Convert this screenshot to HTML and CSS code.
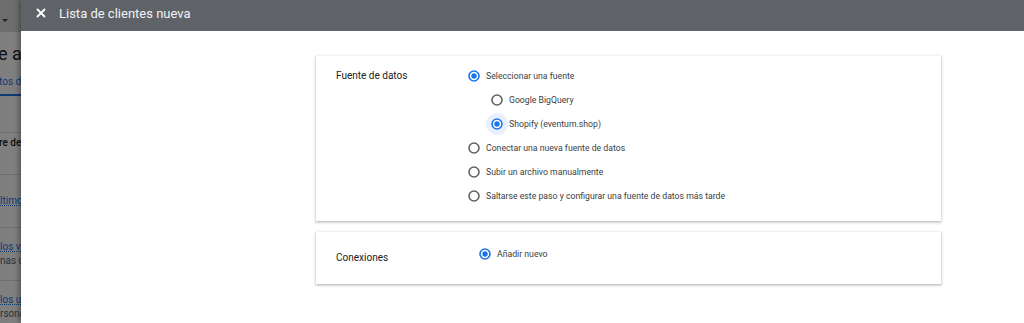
FILE: index.html
```html
<!DOCTYPE html>
<html lang="es">

<head>
    <meta charset="UTF-8">
    <meta name="viewport" content="width=device-width, initial-scale=1.0">
    <title>Lista de clientes nueva</title>
    <link rel="stylesheet" href="styles.css">
</head>

<body>
    <div class="page">
        <!-- page behind the dialog, dimmed -->
        <div class="behind">
            <div class="b-bar"><span class="b-caret"></span></div>
            <div class="b-title">e au</div>
            <div class="b-tab">tos de</div>
            <div class="b-head">re del</div>
            <div class="b-row"><span class="b-link">ltimos</span></div>
            <div class="b-row">
                <span class="b-link">los vi</span>
                <span class="b-sub">nas qu</span>
            </div>
            <div class="b-row">
                <span class="b-link">los us</span>
                <span class="b-sub">rsona</span>
            </div>
        </div>

        <div class="dialog">
            <div class="dialog-head">
                <svg class="close" width="10" height="10" viewBox="0 0 10 10">
                    <path d="M1 1 L9 9 M9 1 L1 9" stroke="#fff" stroke-width="1.8" />
                </svg>
                <span class="dialog-title">Lista de clientes nueva</span>
            </div>

            <div class="dialog-body">
                <section class="card card-source">
                    <div class="card-label">Fuente de datos</div>
                    <div class="options">
                        <div class="opt">
                            <span class="radio on"><svg width="12" height="12" viewBox="0 0 12 12"><circle cx="6" cy="6" r="5" fill="none" stroke="#1a73e8" stroke-width="1.6"/><circle cx="6" cy="6" r="2.7" fill="#1a73e8"/></svg></span>
                            Seleccionar una fuente
                        </div>
                        <div class="opt sub">
                            <span class="radio"><svg width="12" height="12" viewBox="0 0 12 12"><circle cx="6" cy="6" r="5" fill="none" stroke="#5f6368" stroke-width="1.6"/></svg></span>
                            Google BigQuery
                        </div>
                        <div class="opt sub">
                            <span class="radio on focus"><svg width="12" height="12" viewBox="0 0 12 12"><circle cx="6" cy="6" r="5" fill="none" stroke="#1a73e8" stroke-width="1.6"/><circle cx="6" cy="6" r="2.7" fill="#1a73e8"/></svg></span>
                            Shopify (eventum.shop)
                        </div>
                        <div class="opt">
                            <span class="radio"><svg width="12" height="12" viewBox="0 0 12 12"><circle cx="6" cy="6" r="5" fill="none" stroke="#5f6368" stroke-width="1.6"/></svg></span>
                            Conectar una nueva fuente de datos
                        </div>
                        <div class="opt">
                            <span class="radio"><svg width="12" height="12" viewBox="0 0 12 12"><circle cx="6" cy="6" r="5" fill="none" stroke="#5f6368" stroke-width="1.6"/></svg></span>
                            Subir un archivo manualmente
                        </div>
                        <div class="opt">
                            <span class="radio"><svg width="12" height="12" viewBox="0 0 12 12"><circle cx="6" cy="6" r="5" fill="none" stroke="#5f6368" stroke-width="1.6"/></svg></span>
                            Saltarse este paso y configurar una fuente de datos más tarde
                        </div>
                    </div>
                </section>

                <section class="card card-conn">
                    <div class="card-label">Conexiones</div>
                    <div class="options">
                        <div class="opt">
                            <span class="radio on"><svg width="12" height="12" viewBox="0 0 12 12"><circle cx="6" cy="6" r="5" fill="none" stroke="#1a73e8" stroke-width="1.6"/><circle cx="6" cy="6" r="2.7" fill="#1a73e8"/></svg></span>
                            Añadir nuevo
                        </div>
                    </div>
                </section>
            </div>
        </div>
    </div>
</body>

</html>
```

FILE: styles.css
```css
html,
body {
    margin: 0;
    height: 100%;
    overflow: hidden;
}

body {
    font-family: Roboto, "Liberation Sans", sans-serif;
    background: #fff;
}

.page {
    display: flex;
    height: 323px;
}

/* ---- page behind the dialog ---- */
.behind {
    position: relative;
    width: 21px;
    flex-shrink: 0;
    overflow: hidden;
    white-space: nowrap;
    background: #fff;
    color: #202124;
}

.behind::after {
    content: "";
    position: absolute;
    top: 0;
    left: 0;
    right: 0;
    bottom: 0;
    background: rgba(0, 0, 0, 0.5);
}

.b-bar {
    height: 32px;
    background: #dcdcdc;
    padding-left: 2px;
    box-sizing: border-box;
    padding-top: 19px;
}

.b-caret {
    display: block;
    width: 0;
    height: 0;
    border-left: 3px solid transparent;
    border-right: 3px solid transparent;
    border-top: 3px solid #444;
}

.b-title {
    height: 40px;
    line-height: 44px;
    font-size: 18px;
    margin-left: -2px;
}

.b-tab {
    height: 22px;
    line-height: 20px;
    font-size: 10px;
    color: #1a73e8;
    border-bottom: 2px solid #1a73e8;
    margin-left: -1px;
}

.b-head {
    margin-top: 36px;
    height: 43px;
    border-top: 1px solid #dadce0;
    border-bottom: 1px solid #dadce0;
    font-size: 10px;
    font-weight: 500;
    line-height: 20px;
    box-sizing: border-box;
    margin-left: -1px;
}

.b-row {
    height: 52px;
    border-bottom: 1px solid #dadce0;
    font-size: 10px;
    display: flex;
    flex-direction: column;
    justify-content: center;
    line-height: 14px;
}

.b-link {
    color: #1a73e8;
    text-decoration: underline dotted;
}

.b-sub {
    color: #5f6368;
}

/* ---- dialog ---- */
.dialog {
    flex: 1;
    display: flex;
    flex-direction: column;
    background: #fff;
    box-shadow: -2px 0 5px rgba(0, 0, 0, 0.35);
    z-index: 1;
}

.dialog-head {
    height: 31px;
    flex-shrink: 0;
    background: #5f6368;
    display: flex;
    align-items: center;
    padding: 0 0 5px 15px;
    box-sizing: border-box;
}

.close {
    display: block;
    margin-right: 13px;
}

.dialog-title {
    color: #f1f3f4;
    font-size: 13px;
}

.dialog-body {
    padding: 25px 0 0 295px;
}

.card {
    width: 625px;
    display: flex;
    box-sizing: border-box;
    background: #fff;
    box-shadow: 0 1px 2px rgba(60, 64, 67, 0.3), 0 1px 3px 1px rgba(60, 64, 67, 0.12);
}

.card-source {
    height: 165px;
    padding: 8px 0 0 20px;
}

.card-conn {
    height: 52px;
    margin-top: 11px;
    padding: 10px 0 0 20px;
}

.card-label {
    font-size: 10px;
    color: #202124;
    line-height: 24px;
}

.card-source .card-label {
    width: 132px;
}

.card-conn .card-label {
    width: 143px;
    margin-top: 4px;
}

.opt {
    display: flex;
    align-items: center;
    height: 24px;
    font-size: 8.7px;
    color: #3c4043;
}

.opt.sub {
    margin-left: 23px;
}

.radio {
    display: block;
    width: 12px;
    height: 12px;
    margin-right: 6px;
    border-radius: 50%;
}

.radio svg {
    display: block;
}

.radio.focus {
    box-shadow: 0 0 0 5px #e8f0fe;
}
```
